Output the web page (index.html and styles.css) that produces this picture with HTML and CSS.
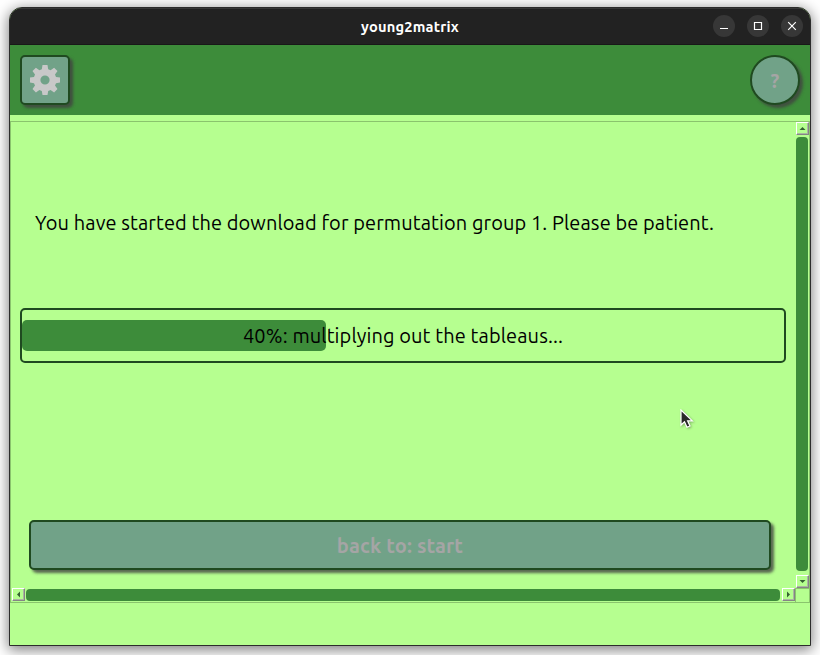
FILE: index.html
```html
<!DOCTYPE html>
<html lang="en">
<head>
<meta charset="utf-8">
<title>young2matrix</title>
<link rel="stylesheet" href="styles.css">
</head>
<body>
<div class="window">
  <header class="titlebar">
    <span class="title">young2matrix</span>
    <div class="controls">
      <span class="control"><svg viewBox="0 0 22 22"><path d="M7 13.5h8"/></svg></span>
      <span class="control"><svg viewBox="0 0 22 22"><path d="M7.5 7.5h7v7h-7z"/></svg></span>
      <span class="control"><svg viewBox="0 0 22 22"><path d="M7.2 7.2l7.6 7.6M14.8 7.2l-7.6 7.6"/></svg></span>
    </div>
  </header>
  <nav class="toolbar">
    <button class="tool settings" aria-label="settings">
      <svg viewBox="0 0 30 30"><path d="M12.500 0h5l.7 4.200 2.400 1 3.500-2.500 3.400 3.400-2.500 3.500 1 2.400 4 .6v5l-4 .6-1 2.400 2.500 3.400-3.400 3.500-3.500-2.500-2.400 1-.7 4h-5l-.7-4-2.400-1-3.500 2.500-3.400-3.500 2.500-3.400-1-2.400-4-.6v-5l4-.6 1-2.400-2.500-3.500 3.400-3.400 3.500 2.500 2.400-1zM15 10.400a4.600 4.600 0 1 0 0 9.200 4.600 4.600 0 0 0 0-9.200z"/></svg>
    </button>
    <button class="tool help">?</button>
  </nav>
  <main class="frame">
    <section class="content">
      <p class="message">You have started the download for permutation group 1. Please be patient.</p>
      <div class="progress">
        <div class="bar"></div>
        <span class="label">40%: multiplying out the tableaus...</span>
      </div>
      <button class="back">back to: start</button>
    </section>
    <div class="scroll vertical">
      <span class="arrow"><svg viewBox="0 0 11 11"><path d="M2.500 7h6L5.500 4z"/></svg></span>
      <span class="thumb"></span>
      <span class="arrow"><svg viewBox="0 0 11 11"><path d="M2.500 4h6L5.500 7z"/></svg></span>
    </div>
    <div class="scroll horizontal">
      <span class="arrow"><svg viewBox="0 0 11 11"><path d="M7 2.500v6L4 5.500z"/></svg></span>
      <span class="thumb"></span>
      <span class="arrow"><svg viewBox="0 0 11 11"><path d="M4 2.500v6L7 5.500z"/></svg></span>
    </div>
    <div class="corner"></div>
  </main>
</div>
<svg class="cursor" viewBox="0 0 14 20"><path d="M1 1v15l3.500-3.300 2.500 5.600 3-1.300-2.400-5.200h4.700z"/></svg>
</body>
</html>
```

FILE: styles.css
```css
* { box-sizing: border-box; }
body {
  margin: 0;
  padding: 7px 9px 9px;
  height: 655px;
  overflow: hidden;
  background: #fff;
  font-family: Ubuntu, "Noto Sans", sans-serif;
}
button { font-family: inherit; padding: 0; margin: 0; }
svg { display: block; }
.window {
  height: 639px;
  border: 1px solid #2c2c2c;
  border-radius: 13px 13px 0 0;
  background: #b6ff90;
  overflow: hidden;
  box-shadow: 0 3px 14px 1px rgba(0, 0, 0, .5);
}
.titlebar {
  height: 37px;
  display: grid;
  grid-template-columns: 1fr auto 1fr;
  align-items: center;
  background: #222;
  border-top: 1px solid #383838;
  border-bottom: 1px solid #181818;
  color: #fff;
}
.title { grid-column: 2; font-size: 14.67px; font-weight: 700; letter-spacing: .2px; line-height: 20px; padding-top: 1px; }
.controls { display: flex; justify-content: flex-end; gap: 12px; padding: 0 7px 1px 0; }
.control { width: 22px; height: 22px; border-radius: 50%; background: #373737; }
.control path { fill: none; stroke: #fff; stroke-width: 1.2; }
.toolbar {
  height: 70px;
  padding: 10px;
  display: flex;
  justify-content: space-between;
  background: #3d8c3a;
}
.tool {
  width: 50px;
  height: 50px;
  display: flex;
  align-items: center;
  justify-content: center;
  border: 2px solid #1f4a20;
  background: #71a288;
  color: #a5a5a5;
  box-shadow: 3px 3px 3px rgba(65, 65, 65, .8);
}
.settings { border-radius: 5px; }
.settings svg { width: 30px; height: 30px; fill: #c8c8c8; fill-rule: evenodd; }
.help { border-radius: 50%; font-size: 20px; font-weight: 700; }
.frame {
  height: 482px;
  margin-top: 6px;
  display: grid;
  grid-template: 1fr 14px / 1fr 14px;
  border: 1px solid #8ac46d;
}
.content { display: flex; flex-direction: column; padding: 0 9px; }
.message { margin: 86px 0 0 15px; height: 30px; line-height: 30px; font-size: 20px; letter-spacing: .093px; white-space: nowrap; }
.progress {
  height: 55px;
  margin-top: 70px;
  display: grid;
  align-items: center;
  border: 2px solid #1f4a20;
  border-radius: 5px;
}
.bar, .label { grid-area: 1 / 1; }
.bar { width: 304px; height: 31px; border-radius: 5px; background: #3d8c3a; }
.label { text-align: center; font-size: 20px; letter-spacing: .11px; line-height: 30px; }
.back {
  height: 50px;
  margin: 157px 15px 0 9px;
  border: 2px solid #1f4a20;
  border-radius: 5px;
  background: #71a288;
  color: #a5a5a5;
  font-size: 20px;
  font-weight: 700;
  letter-spacing: .16px;
  box-shadow: 3px 3px 3px rgba(65, 65, 65, .8);
}
.scroll { display: flex; }
.vertical { flex-direction: column; padding-left: 1px; }
.horizontal { padding-left: 1px; }
.arrow {
  width: 13px;
  height: 13px;
  flex: none;
  border: 1px solid;
  border-color: #fff #858585 #858585 #fff;
  box-shadow: inset -1px -1px #a9b79f;
}
.arrow svg { width: 11px; height: 11px; fill: #356232; }
.thumb { flex: 1; border-radius: 4px; background: #3d8c3a; }
.vertical .thumb { width: 12px; margin: 2px 0 4px; }
.horizontal .thumb { height: 12px; margin: 1px 2px 0 1px; }
.corner { border: 1px solid #8ac46d; border-width: 1px 0 0 1px; }
.cursor {
  position: absolute;
  left: 680px;
  top: 409px;
  width: 14px;
  height: 20px;
  fill: #292929;
  stroke: #fff;
  stroke-width: 1.2;
  filter: drop-shadow(1px 1px 1px rgba(0, 0, 0, .3));
}
```
